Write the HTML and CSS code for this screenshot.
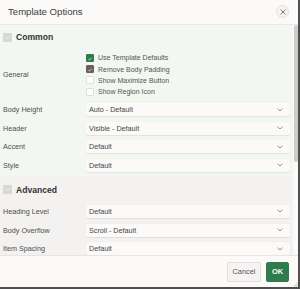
FILE: index.html
```html
<!DOCTYPE html>
<html lang="en">
<head>
  <meta charset="UTF-8">
  <title>Template Options</title>
  <link rel="stylesheet" href="styles.css">
</head>
<body>
  <div class="dialog">
    <header class="dlg-head">
      <h1 class="dlg-title">Template Options</h1>
      <button class="close-btn" title="Close">
        <svg width="6" height="6" viewBox="0 0 6 6"><path d="M0.5 0.5L5.5 5.5M5.5 0.5L0.5 5.5" stroke="#6b6b6b" stroke-width="0.9"/></svg>
      </button>
    </header>

    <div class="dlg-body">
      <div class="dlg-content">
        <section class="group group-common">
          <div class="group-title">
            <span class="toggle"><svg width="9" height="9" viewBox="0 0 9 9"><path d="M2.5 3.8L4.5 5.6L6.5 3.8" fill="none" stroke="#f4f4f4" stroke-width="0.9"/></svg></span>
            Common
          </div>
          <div class="fields">
            <div class="field">
              <div class="label">General</div>
              <div class="checks">
                <div class="check"><span class="box box-on"><svg width="8" height="8" viewBox="0 0 8 8"><path d="M1.8 4.1L3.3 5.5L6.2 2.4" fill="none" stroke="#fff" stroke-width="0.9"/></svg></span>Use Template Defaults</div>
                <div class="check"><span class="box box-dim"><svg width="8" height="8" viewBox="0 0 8 8"><path d="M1.8 4.1L3.3 5.5L6.2 2.4" fill="none" stroke="#fff" stroke-width="0.9"/></svg></span>Remove Body Padding</div>
                <div class="check"><span class="box"></span>Show Maximize Button</div>
                <div class="check"><span class="box"></span>Show Region Icon</div>
              </div>
            </div>
            <div class="field">
              <div class="label">Body Height</div>
              <div class="select">Auto - Default<svg width="6" height="4" viewBox="0 0 6 4"><path d="M0.5 0.7L3 3L5.5 0.7" fill="none" stroke="#7a7a7a" stroke-width="0.8"/></svg></div>
            </div>
            <div class="field">
              <div class="label">Header</div>
              <div class="select">Visible - Default<svg width="6" height="4" viewBox="0 0 6 4"><path d="M0.5 0.7L3 3L5.5 0.7" fill="none" stroke="#7a7a7a" stroke-width="0.8"/></svg></div>
            </div>
            <div class="field">
              <div class="label">Accent</div>
              <div class="select">Default<svg width="6" height="4" viewBox="0 0 6 4"><path d="M0.5 0.7L3 3L5.5 0.7" fill="none" stroke="#7a7a7a" stroke-width="0.8"/></svg></div>
            </div>
            <div class="field">
              <div class="label">Style</div>
              <div class="select">Default<svg width="6" height="4" viewBox="0 0 6 4"><path d="M0.5 0.7L3 3L5.5 0.7" fill="none" stroke="#7a7a7a" stroke-width="0.8"/></svg></div>
            </div>
          </div>
        </section>

        <section class="group group-advanced">
          <div class="group-title">
            <span class="toggle"><svg width="9" height="9" viewBox="0 0 9 9"><path d="M2.5 3.8L4.5 5.6L6.5 3.8" fill="none" stroke="#f4f4f4" stroke-width="0.9"/></svg></span>
            Advanced
          </div>
          <div class="fields">
            <div class="field">
              <div class="label">Heading Level</div>
              <div class="select">Default<svg width="6" height="4" viewBox="0 0 6 4"><path d="M0.5 0.7L3 3L5.5 0.7" fill="none" stroke="#7a7a7a" stroke-width="0.8"/></svg></div>
            </div>
            <div class="field">
              <div class="label">Body Overflow</div>
              <div class="select">Scroll - Default<svg width="6" height="4" viewBox="0 0 6 4"><path d="M0.5 0.7L3 3L5.5 0.7" fill="none" stroke="#7a7a7a" stroke-width="0.8"/></svg></div>
            </div>
            <div class="field">
              <div class="label">Item Spacing</div>
              <div class="select">Default<svg width="6" height="4" viewBox="0 0 6 4"><path d="M0.5 0.7L3 3L5.5 0.7" fill="none" stroke="#7a7a7a" stroke-width="0.8"/></svg></div>
            </div>
          </div>
        </section>
      </div>
      <div class="scrollbar"><div class="thumb"></div></div>
    </div>

    <footer class="dlg-foot">
      <button class="btn">Cancel</button>
      <button class="btn btn-ok">OK</button>
    </footer>

    <svg class="grip" width="5" height="5" viewBox="0 0 5 5"><path d="M4.5 1L1 4.5M4.5 3L3 4.5" stroke="#9a9a9a" stroke-width="0.7"/></svg>
  </div>
</body>
</html>
```

FILE: styles.css
```css
* {
  margin: 0;
  padding: 0;
  box-sizing: border-box;
}

body {
  background: #4f4f4f;
  font-family: 'Liberation Sans', Arial, sans-serif;
  color: #4a4a4a;
}

.dialog {
  position: relative;
  width: 298px;
  height: 287px;
  background: #fbfaf9;
  display: flex;
  flex-direction: column;
  overflow: hidden;
}

.dlg-head {
  height: 25px;
  flex: none;
  display: flex;
  align-items: center;
  justify-content: space-between;
  padding: 0 9px 1px 8px;
  border-bottom: 1px solid #e9e8e6;
}

.dlg-title {
  font-size: 9.6px;
  font-weight: 400;
  color: #3c3c3c;
}

.close-btn {
  width: 13px;
  height: 13px;
  border-radius: 50%;
  border: 1px solid #e2e1df;
  background: #f5f4f3;
  display: flex;
  align-items: center;
  justify-content: center;
}

.dlg-body {
  flex: 1;
  display: flex;
  overflow: hidden;
}

.dlg-content {
  flex: 1;
  overflow: hidden;
}

.scrollbar {
  width: 5px;
  flex: none;
  background: #fbfaf9;
  padding-left: 1px;
}

.thumb {
  width: 3.5px;
  height: 137px;
  background: #cdcccb;
  border-radius: 2px;
}

.group {
  padding: 3px 3px 5px 3px;
}

.group-common {
  background: #f2f7f1;
}

.group-advanced {
  background: #f3f2f1;
  padding-top: 4px;
}

.group-title {
  height: 18px;
  display: flex;
  align-items: center;
  gap: 4px;
  font-size: 8.6px;
  font-weight: 700;
  color: #333;
  margin-bottom: 6px;
}

.toggle {
  width: 9px;
  height: 9px;
  background: #d7d7d6;
  border-radius: 1px;
  display: flex;
}

.fields {
  display: flex;
  flex-direction: column;
  gap: 5.6px;
}

.field {
  display: flex;
  align-items: center;
}

.label {
  width: 83px;
  flex: none;
  font-size: 7.2px;
  color: #4e4e4e;
}

.checks {
  display: flex;
  flex-direction: column;
}

.check {
  height: 11.4px;
  display: flex;
  align-items: center;
  gap: 4px;
  font-size: 7px;
  color: #555;
}

.box {
  width: 8px;
  height: 8px;
  border-radius: 1px;
  background: #fff;
  border: 0.6px solid #e0dfdd;
  display: flex;
}

.box-on {
  background: #2e7a4c;
  border-color: #2e7a4c;
}

.box-dim {
  background: #6c605c;
  border-color: #6c605c;
}

.select {
  flex: 1;
  height: 13px;
  display: flex;
  align-items: center;
  justify-content: space-between;
  padding: 0 7px 0 3px;
  background: #fbfaf9;
  border-radius: 2px;
  box-shadow: 0 0.5px 1px rgba(0, 0, 0, 0.08);
  font-size: 7.2px;
  color: #454545;
}

.dlg-foot {
  height: 32px;
  flex: none;
  display: flex;
  align-items: center;
  justify-content: flex-end;
  gap: 5px;
  padding: 0 9px;
  border-top: 1px solid #e6e5e3;
  background: #fbfaf9;
}

.btn {
  height: 20px;
  width: 34px;
  border: 1px solid #e1e0de;
  border-radius: 2px;
  background: #f5f4f3;
  font-family: 'Liberation Sans', Arial, sans-serif;
  font-size: 7.4px;
  color: #555;
}

.btn-ok {
  width: 23px;
  background: #2e7b4e;
  border-color: #2e7b4e;
  color: #fff;
  font-weight: 700;
}

.grip {
  position: absolute;
  right: 0;
  bottom: 0;
}
```
